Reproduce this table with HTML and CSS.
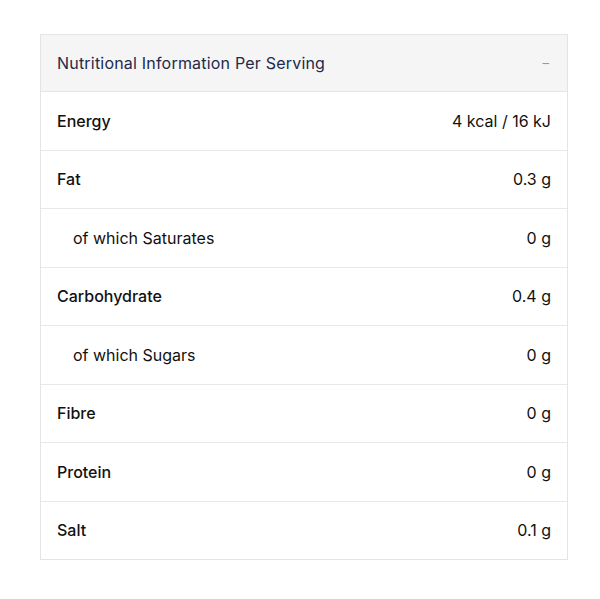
FILE: index.html
```html
<!DOCTYPE html>
<html>
<head>
<meta charset="utf-8">
<link rel="stylesheet" href="styles.css">
</head>
<body>
<div class="panel">
  <div class="head">
    <span class="title">Nutritional Information Per Serving</span>
    <span class="toggle">–</span>
  </div>
  <div class="row"><span class="label strong">Energy</span><span class="val">4 kcal / 16 kJ</span></div>
  <div class="row"><span class="label strong">Fat</span><span class="val">0.3 g</span></div>
  <div class="row"><span class="label sub">of which Saturates</span><span class="val">0 g</span></div>
  <div class="row"><span class="label strong">Carbohydrate</span><span class="val">0.4 g</span></div>
  <div class="row"><span class="label sub">of which Sugars</span><span class="val">0 g</span></div>
  <div class="row"><span class="label strong">Fibre</span><span class="val">0 g</span></div>
  <div class="row"><span class="label strong">Protein</span><span class="val">0 g</span></div>
  <div class="row"><span class="label strong">Salt</span><span class="val">0.1 g</span></div>
</div>
</body>
</html>
```

FILE: styles.css
```css
html, body {
  margin: 0;
  padding: 0;
  background: #fff;
}
body {
  padding: 34px 32px 0 40px;
  font-family: Inter, "Noto Sans", sans-serif;
  color: #111;
}
.panel {
  width: 526px;
  border: 1px solid #e4e4e4;
}
.head {
  height: 56px;
  background: #f5f5f5;
  display: flex;
  align-items: center;
  justify-content: space-between;
  padding: 0 18px 0 16px;
  border-bottom: 1px solid #e4e4e4;
}
.title {
  font-size: 16px;
  color: #1e2a4a;
  letter-spacing: 0.2px;
}
.toggle {
  color: #999;
  font-size: 13px;
}
.row {
  height: 57.5px;
  display: flex;
  align-items: center;
  justify-content: space-between;
  padding: 0 16px;
  border-bottom: 1px solid #e8e8e8;
  font-size: 16px;
}
.row:last-child {
  border-bottom: none;
}
.strong {
  font-weight: 500;
}
.sub {
  padding-left: 16px;
  font-weight: 400;
}
.val {
  font-weight: 400;
}
```
